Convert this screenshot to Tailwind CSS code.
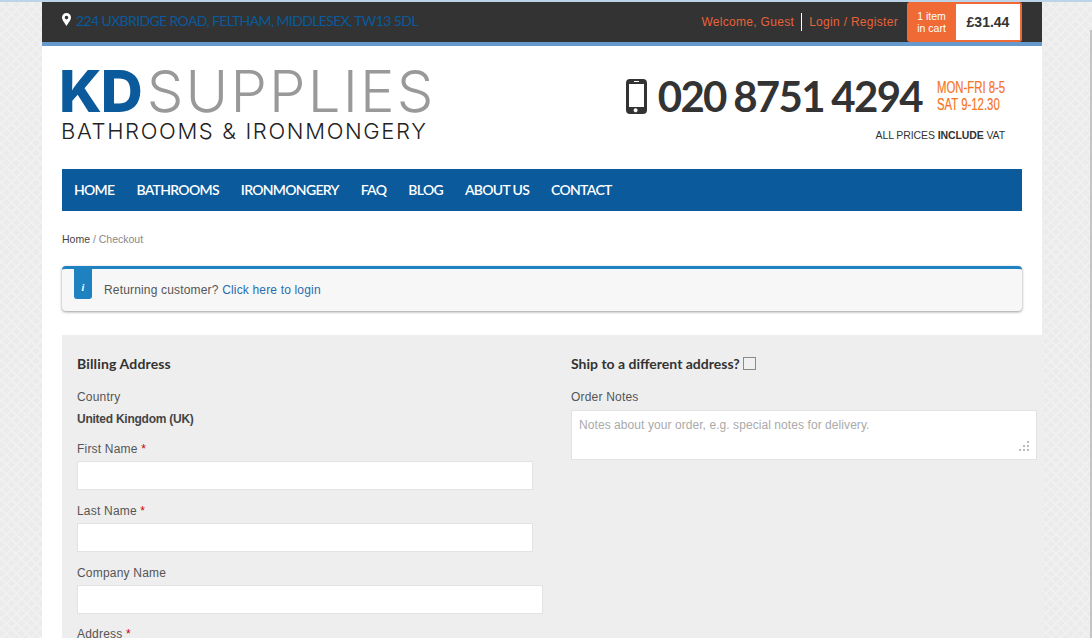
<!DOCTYPE html>
<html lang="en">
<head>
    <meta charset="UTF-8">
    <title>KD Supplies - Checkout</title>
    <script src="https://cdn.jsdelivr.net/npm/@tailwindcss/browser@4"></script>
</head>
<body class="relative h-[638px] overflow-hidden bg-[#ebebeb] bg-[repeating-linear-gradient(45deg,#f0f0f0_0,#f0f0f0_2px,transparent_2px,transparent_7px),repeating-linear-gradient(-45deg,#f0f0f0_0,#f0f0f0_2px,transparent_2px,transparent_7px)] font-['Liberation_Sans',sans-serif] text-[12px] text-[#555]">
    <div class="h-[2px] bg-[#bcd3e8]"></div>
    <div class="absolute right-0 top-[30px] bottom-0 w-[2px] bg-[#c4c4c4]"></div>
    <div class="ml-[42px] w-[1000px] h-[636px] overflow-hidden bg-white">
        <!-- top bar -->
        <div class="h-[44px] bg-[#333] border-b-4 border-[#6699cc] flex justify-between pl-[20px] pr-[20px]">
            <div class="flex items-center gap-[5px] pb-[3px] font-['Lato',sans-serif] text-[14px] text-[#0a5a9c] tracking-[-0.62px]">
                <svg width="9" height="13" viewBox="0 0 9 13" class="mb-[2px]"><path fill="#fff" fill-rule="evenodd" d="M4.5 0A4.5 4.5 0 0 0 0 4.5C0 7 3 10.500 4.500 13 6 10.500 9 7 9 4.500A4.500 4.500 0 0 0 4.500 0Zm0 2.800a1.800 1.800 0 1 1 0 3.600 1.800 1.800 0 0 1 0-3.600Z"/></svg>
                <span>224 UXBRIDGE ROAD, FELTHAM, MIDDLESEX, TW13 5DL</span>
            </div>
            <div class="flex items-start">
                <div class="flex items-center h-[40px] text-[12px] tracking-[0.3px] text-[#e8623a] mr-[9px]">
                    <span class="pr-[7px] border-r border-white leading-[18px]">Welcome, Guest</span>
                    <span class="pl-[7px]">Login / Register</span>
                </div>
                <div class="flex h-[40px] w-[115px] bg-[#ef6a35] rounded-[3px] p-[2px] pl-0">
                    <div class="w-[49px] pt-[6px] text-center text-[10.5px] leading-[12px] text-white">1 item<br>in cart</div>
                    <div class="flex-1 bg-white flex items-center justify-center text-[14px] font-bold text-[#333]">£31.44</div>
                </div>
            </div>
        </div>
        <!-- logo and phone -->
        <div class="h-[123px] flex justify-between pl-[20px] pr-[37px]">
            <div class="pt-[17px] w-[380px]">
                <div class="flex items-baseline h-[56px] leading-[56px] text-[58px] font-['Inter',sans-serif]">
                    <span class="font-extrabold text-[#0a5a9c] tracking-[-1px] ml-[-3px]">KD</span>
                    <span class="font-light text-[#999] ml-[5px] tracking-[2.2px]">SUPPLIES</span>
                </div>
                <div class="font-['Inter',sans-serif] font-light text-[22px] leading-[24px] text-[#222] tracking-[1.65px] whitespace-nowrap mt-[0px] ml-[-1px]">BATHROOMS &amp; IRONMONGERY</div>
            </div>
            <div class="flex flex-col items-end pt-[27px]">
                <div class="flex items-center">
                    <svg width="21" height="35" viewBox="0 0 21 35" class="mr-[11px]"><path fill="#333" fill-rule="evenodd" d="M4 0h13a4 4 0 0 1 4 4v27a4 4 0 0 1-4 4H4a4 4 0 0 1-4-4V4a4 4 0 0 1 4-4Zm-1 5v23h15V5H3Zm5-3v1h5V2H8Zm2.500 27.500a2 2 0 1 0 0 3.600 2 2 0 0 0 0-3.600Z"/></svg>
                    <span class="font-['Lato',sans-serif] font-bold text-[42px] leading-[46px] text-[#333] tracking-[-1.7px] [word-spacing:-1px]">020 8751 4294</span>
                    <div class="ml-[15px] scale-x-[0.71] origin-left w-[68px] whitespace-nowrap text-[16px] leading-[17.500px] text-[#f5741f] [-webkit-text-stroke:0.2px_#f5741f]">MON-FRI 8-5<br>SAT 9-12.30</div>
                </div>
                <div class="mt-[9px] text-[10.5px] tracking-[-0.1px] text-[#333]">ALL PRICES <b>INCLUDE</b> VAT</div>
            </div>
        </div>
        <!-- nav -->
        <nav class="ml-[20px] w-[960px] h-[42px] bg-[#0a5a9c] flex items-center gap-[22px] pl-[12px] pb-[2px] font-['Lato',sans-serif] font-semibold text-[14px] tracking-[-0.7px] text-white">
            <a>HOME</a><a>BATHROOMS</a><a>IRONMONGERY</a><a>FAQ</a><a>BLOG</a><a>ABOUT US</a><a>CONTACT</a>
        </nav>
        <div class="ml-[20px] mt-[22px] text-[10.5px] leading-[12px] text-[#888]"><span class="text-[#444]">Home</span> / Checkout</div>
        <!-- notice -->
        <div class="relative ml-[20px] mt-[21px] w-[960px] h-[45px] border-t-[3px] border-[#1e81c0] rounded-[4px] bg-[#f7f7f7] shadow-[0_1px_3px_rgba(0,0,0,0.4)] flex items-center pl-[42px] text-[12px] tracking-[0.17px]">
            <div class="absolute left-[12px] top-[0] w-[18px] h-[30px] bg-[#1e81c0] rounded-b-[3px] flex items-end justify-center pb-[5px]">
                <span class="font-['Liberation_Serif',serif] italic font-bold text-[10px] leading-[12px] text-white">i</span>
            </div>
            <span>Returning customer? <a class="text-[#2a6db0]">Click here to login</a></span>
        </div>
        <!-- checkout form -->
        <div class="ml-[20px] mt-[24px] w-[980px] h-[320px] bg-[#eee] grid grid-cols-[494px_1fr] pl-[15px] pt-[20px] tracking-[0.2px]">
            <div>
                <h3 class="font-['Lato',sans-serif] font-bold text-[14px] leading-[18px] tracking-[0.15px] text-[#333]">Billing Address</h3>
                <div class="mt-[17px] leading-[14px]">Country</div>
                <div class="mt-[8px] leading-[14px] font-bold tracking-[-0.25px] text-[#444]">United Kingdom (UK)</div>
                <label class="block mt-[16px] leading-[14px]">First Name <span class="text-[#c00]">*</span></label>
                <input class="block mt-[5px] w-[456px] h-[29px] bg-white border border-[#e2e2e2]">
                <label class="block mt-[14px] leading-[14px]">Last Name <span class="text-[#c00]">*</span></label>
                <input class="block mt-[5px] w-[456px] h-[29px] bg-white border border-[#e2e2e2]">
                <label class="block mt-[14px] leading-[14px]">Company Name</label>
                <input class="block mt-[5px] w-[466px] h-[29px] bg-white border border-[#e2e2e2]">
                <label class="block mt-[13px] leading-[14px]">Address <span class="text-[#c00]">*</span></label>
            </div>
            <div>
                <div class="flex items-center gap-[3px]">
                    <h3 class="font-['Lato',sans-serif] font-bold text-[14px] leading-[18px] tracking-[0px] text-[#333]">Ship to a different address?</h3>
                    <span class="w-[13px] h-[13px] mb-[2px] border border-[#8a8a8a] bg-[#f0f0f0]"></span>
                </div>
                <div class="mt-[17px] leading-[14px]">Order Notes</div>
                <div class="relative mt-[6px] w-[466px] h-[50px] bg-white border border-[#e2e2e2] pl-[7px] pt-[7px] leading-[14px] tracking-[0.07px] text-[#aaa]">
                    Notes about your order, e.g. special notes for delivery.
                    <svg width="12" height="12" viewBox="0 0 12 12" class="absolute right-[6px] bottom-[6px]"><path fill="#bbb" d="M9 0h2v2H9zM5 4h2v2H5zM9 4h2v2H9zM1 8h2v2H1zM5 8h2v2H5zM9 8h2v2H9z"/></svg>
                </div>
            </div>
        </div>
    </div>
</body>
</html>
